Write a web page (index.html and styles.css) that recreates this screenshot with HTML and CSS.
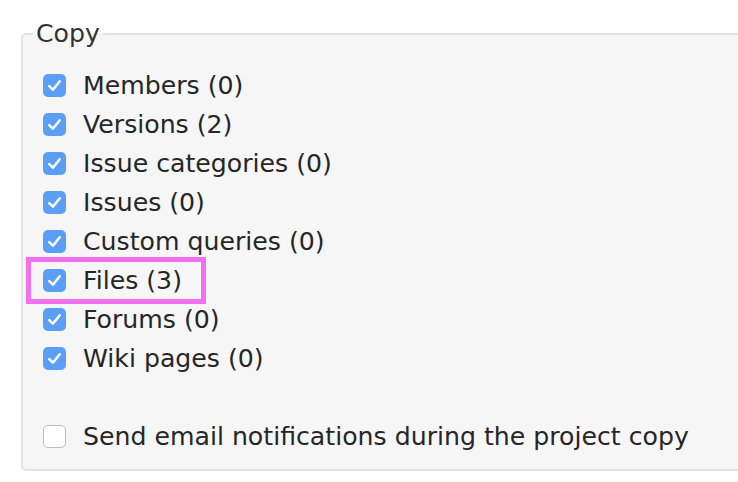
FILE: index.html
```html
<!DOCTYPE html>
<html>
<head>
  <meta charset="UTF-8">
  <title>Copy project</title>
  <link rel="stylesheet" href="styles.css">
</head>
<body>
  <fieldset class="box">
    <legend>Copy</legend>
    <label class="row"><span class="cb on"><svg viewBox="0 0 22 22"><path d="M6 11.5l3.5 3.5 6.5-8"/></svg></span>Members (0)</label>
    <label class="row"><span class="cb on"><svg viewBox="0 0 22 22"><path d="M6 11.5l3.5 3.5 6.5-8"/></svg></span>Versions (2)</label>
    <label class="row"><span class="cb on"><svg viewBox="0 0 22 22"><path d="M6 11.5l3.5 3.5 6.5-8"/></svg></span>Issue categories (0)</label>
    <label class="row"><span class="cb on"><svg viewBox="0 0 22 22"><path d="M6 11.5l3.5 3.5 6.5-8"/></svg></span>Issues (0)</label>
    <label class="row"><span class="cb on"><svg viewBox="0 0 22 22"><path d="M6 11.5l3.5 3.5 6.5-8"/></svg></span>Custom queries (0)</label>
    <label class="row marked"><span class="cb on"><svg viewBox="0 0 22 22"><path d="M6 11.5l3.5 3.5 6.5-8"/></svg></span>Files (3)</label>
    <label class="row"><span class="cb on"><svg viewBox="0 0 22 22"><path d="M6 11.5l3.5 3.5 6.5-8"/></svg></span>Forums (0)</label>
    <label class="row"><span class="cb on"><svg viewBox="0 0 22 22"><path d="M6 11.5l3.5 3.5 6.5-8"/></svg></span>Wiki pages (0)</label>
    <div class="notify">
      <label class="row"><span class="cb"></span>Send email notifications during the project copy</label>
    </div>
  </fieldset>
</body>
</html>
```

FILE: styles.css
```css
body {
  margin: 0;
  background: #fff;
  font-family: "DejaVu Sans", Verdana, sans-serif;
  font-size: 25.2px;
  color: #262626;
  overflow: hidden;
}
.box {
  margin: 20px 0 0 21px;
  width: 760px;
  padding: 18px 0 13px 20px;
  border: 2px solid #e4e4e4;
  border-radius: 5px;
  background: #f6f6f6;
}
.box legend {
  margin-left: -10px;
  padding: 0 3px;
  line-height: 28px;
  color: #333;
}
.row {
  display: flex;
  align-items: center;
  height: 39px;
  width: max-content;
}
.cb {
  width: 23px;
  height: 23px;
  margin-right: 17px;
  box-sizing: border-box;
  border-radius: 5px;
  border: 1px solid #bdbdbd;
  background: #fff;
}
.cb.on {
  border: none;
  background: #5a9ef5;
}
.cb svg {
  display: block;
  width: 23px;
  height: 23px;
  fill: none;
  stroke: #fff;
  stroke-width: 2.4;
  stroke-linecap: round;
  stroke-linejoin: round;
}
.notify {
  margin-top: 39px;
}
.marked {
  position: relative;
}
.marked::after {
  content: "";
  position: absolute;
  left: -17px;
  top: -4px;
  width: 180px;
  height: 47px;
  box-sizing: border-box;
  border: 5px solid #f26ff0;
}
```
